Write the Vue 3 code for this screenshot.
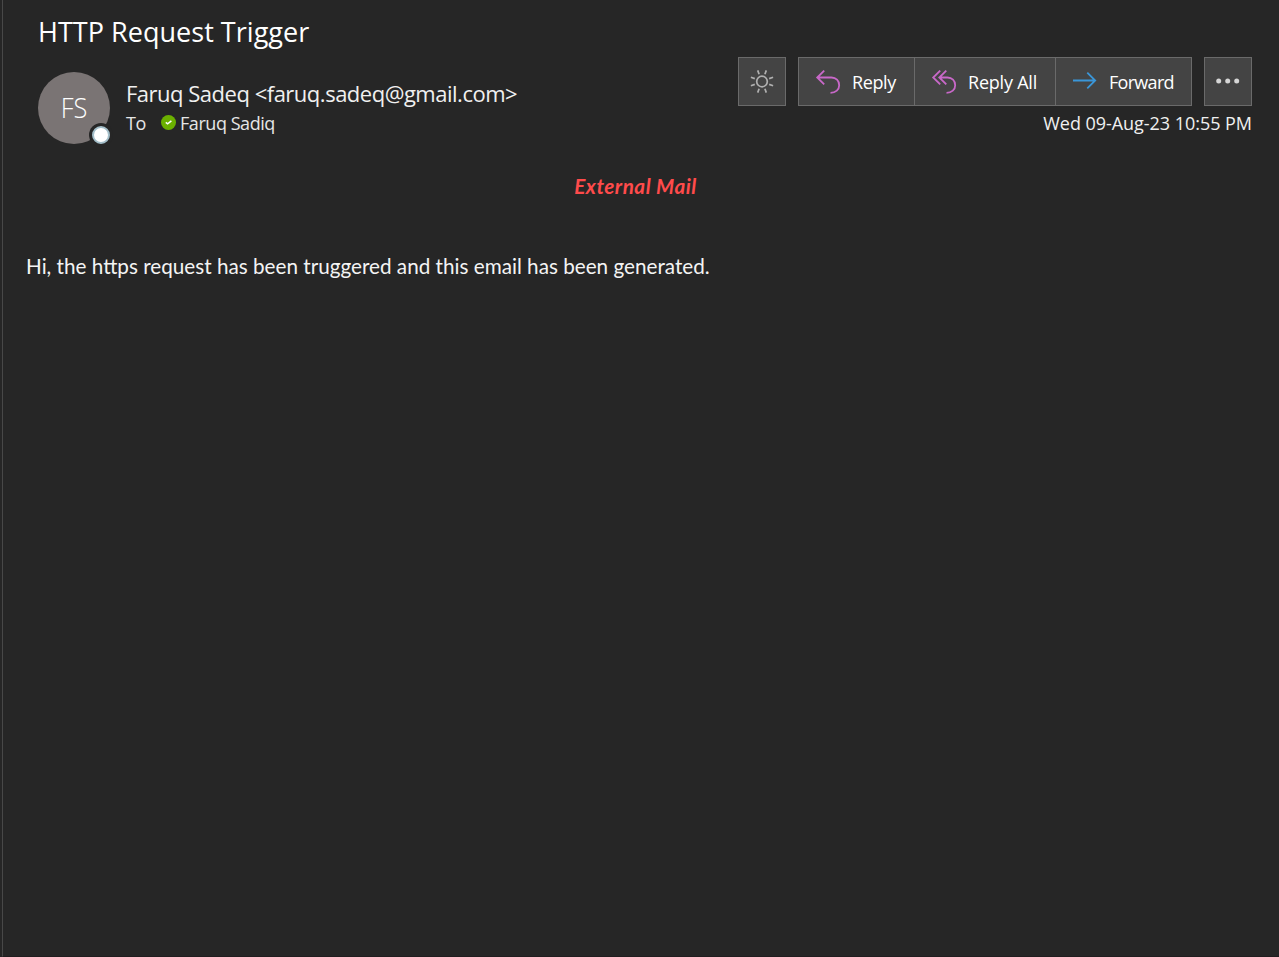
<script setup>
const subject = 'HTTP Request Trigger'
</script>

<template>
  <main class="pane">
    <h1 class="subject"><span>{{ subject }}</span></h1>
    <header class="head">
      <div class="avatar">
        <span class="initials">FS</span>
        <span class="presence"></span>
      </div>
      <div class="people">
        <div class="from"><span>Faruq Sadeq &lt;faruq.sadeq@gmail.com&gt;</span></div>
        <div class="to">
          <span class="label">To</span>
          <svg class="check" width="15" height="15" viewBox="0 0 15 15"><circle cx="7.5" cy="7.5" r="7.5" fill="#6bb000" /><path d="M4.8 7.4l1.8 1.4 3.8-3" fill="none" stroke="#fff" stroke-width="1.5" /></svg>
          <span class="recipient">Faruq Sadiq</span>
        </div>
      </div>
      <div class="side">
        <div class="actions">
          <button class="btn square">
            <svg width="24" height="24" viewBox="0 0 24 24" fill="none" stroke="#b0b0b0" stroke-width="1.7"><circle cx="12" cy="11.5" r="5.3" /><path d="M14.9 4.3L16.3 .4M19.2 8.6L23.1 7.2M19.2 14.4L23.1 15.8M14.9 18.7L16.3 22.6M9.1 18.7L7.7 22.6M4.8 14.4L.9 15.8M4.8 8.6L.9 7.2M9.1 4.3L7.7 .4" /></svg>
          </button>
          <div class="group">
            <button class="btn reply">
              <svg width="26" height="24" viewBox="0 0 26 24" fill="none" stroke="#c868c8" stroke-width="1.8"><path d="M9.2 .6L2.2 7.5L9.2 14.4M2.2 7.5H16.5C21 7.5 24.2 10.9 24.2 15.2S20.8 22.8 15.5 22.8" /></svg>
              <span>Reply</span>
            </button>
            <button class="btn all">
              <svg width="26" height="24" viewBox="0 0 26 24" fill="none" stroke="#c868c8" stroke-width="1.8"><path d="M9.2 .6L2.2 7.5L9.2 14.4M15.3 .6L8.3 7.5L15.3 14.4M8.3 7.5H16.5C21 7.5 24.2 10.9 24.2 15.2S20.8 22.8 15.5 22.8" /></svg>
              <span>Reply All</span>
            </button>
            <button class="btn forward">
              <svg width="26" height="24" viewBox="0 0 26 24" fill="none" stroke="#3a96d8" stroke-width="1.8"><path d="M1 10.5H23.2M15.3 2.6L23.2 10.5L15.3 18.4" /></svg>
              <span>Forward</span>
            </button>
          </div>
          <button class="btn square more">
            <svg width="24" height="6" viewBox="0 0 24 6" fill="#d6d6d6"><circle cx="2.7" cy="3" r="2.5" /><circle cx="11.7" cy="3" r="2.5" /><circle cx="20.7" cy="3" r="2.5" /></svg>
          </button>
        </div>
        <div class="date"><span>Wed 09-Aug-23 10:55 PM</span></div>
      </div>
    </header>
    <section class="mail">
      <p class="external"><span>External Mail</span></p>
      <p class="text"><span>Hi, the https request has been truggered and this email has been generated.</span></p>
    </section>
  </main>
</template>

<style>
body { background: #262626; }
</style>

<style scoped>
.pane { box-sizing: border-box; height: 957px; margin-left: 2px; border-left: 1px solid #484848; border-bottom: 1px solid #211d1f; padding: 12px 27px 0 35px; background: #262626; color: #fff; font-family: "Open Sans", sans-serif; overflow: hidden; white-space: nowrap; }
.subject { margin: 0; height: 40px; line-height: 40px; font-size: 27px; font-weight: 400; letter-spacing: .03px; }
.head { display: flex; height: 98px; }
.avatar { position: relative; width: 72px; height: 72px; margin-top: 20px; border-radius: 50%; background: #7a7474; display: flex; align-items: center; justify-content: center; }
.initials { font-size: 27px; line-height: 36px; font-weight: 300; transform: scaleX(.94); }
.presence { position: absolute; left: 54px; top: 54px; width: 14px; height: 14px; border: 2px solid #a3bec9; border-radius: 50%; background: #fff; box-shadow: 0 0 0 3px #262626; }
.people { margin: 26px 0 0 16px; }
.from { height: 31px; line-height: 30px; font-size: 22px; letter-spacing: -.49px; color: #f0f0f0; }
.to { display: flex; height: 28px; align-items: center; font-size: 18px; letter-spacing: -.45px; color: #e6e6e6; }
.label { width: 35px; }
.check { margin-bottom: 1px; }
.recipient { margin-left: 4px; }
.side { margin: 5px 0 0 auto; }
.actions { display: flex; gap: 12px; }
.btn { box-sizing: border-box; height: 49px; margin: 0; padding: 0; display: flex; align-items: center; border: 1px solid #6a6a6a; background: #444; color: #fff; font: 18px/24px "Open Sans", sans-serif; white-space: nowrap; }
.square { width: 48px; justify-content: center; }
.more svg { margin-bottom: 2px; }
.group { display: flex; }
.group .btn + .btn { border-left: 0; }
.group svg { margin: 0 11px 0 16px; }
.reply { width: 117px; letter-spacing: -.4px; }
.all { width: 141px; letter-spacing: -.22px; }
.forward { width: 136px; letter-spacing: -.7px; }
.date { height: 36px; line-height: 34px; font-size: 18px; text-align: right; color: #f0f0f0; letter-spacing: -.04px; }
.mail { margin: 0 0 0 -12px; font-family: Lato, sans-serif; }
.external { margin: 22px 0 0; padding-right: 7px; text-align: center; line-height: 28px; font-size: 20.7px; font-weight: 700; font-style: italic; letter-spacing: .5px; color: #ff4b4b; }
.text { margin: 52px 0 0; line-height: 28px; font-size: 20.7px; color: #f4f4f4; }
</style>
